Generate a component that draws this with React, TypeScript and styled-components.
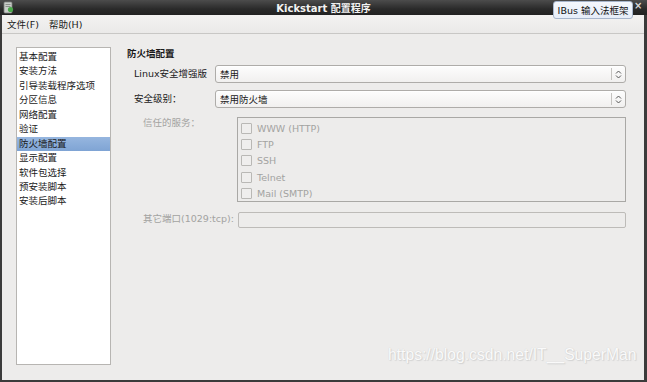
import React from "react";
import styled, { createGlobalStyle } from "styled-components";

const GlobalStyle = createGlobalStyle`
  html, body { margin: 0; padding: 0; background: #edeceb; }
  body { font-family: "DejaVu Sans", "Noto Sans CJK SC", sans-serif; font-size: 9.5px; color: #1a1a1a; }
`;

const Frame = styled.div`
  position: relative;
  width: 647px;
  height: 382px;
  display: flex;
  flex-direction: column;
  overflow: hidden;
`;

const TitleBar = styled.div`
  height: 15px;
  flex: none;
  display: flex;
  align-items: center;
  justify-content: center;
  background: linear-gradient(#4c4c4c, #2a2a2a 60%, #222);
  color: #f2f2f2;
  font-weight: bold;
  font-size: 10px;
  position: relative;
`;

const AppIcon = styled.svg`
  position: absolute;
  left: 3px;
  top: 1px;
`;

const Body = styled.div`
  flex: 1;
  display: flex;
  flex-direction: column;
  background: #edeceb;
  border-left: 2px solid #3b3b3b;
  border-right: 3px solid #3b3b3b;
  border-bottom: 2px solid #3b3b3b;
`;

const MenuBar = styled.div`
  height: 18px;
  flex: none;
  display: flex;
  align-items: center;
  gap: 10px;
  padding-left: 5px;
  background: linear-gradient(#f3f2f1, #eae9e8);
  border-bottom: 1px solid #c8c7c5;
`;

const MenuItem = styled.span`
  font-size: 9.5px;
  color: #1a1a1a;
`;

const Content = styled.div`
  flex: 1;
  display: flex;
  padding: 13px 0 0 14px;
  gap: 16px;
`;

const NavList = styled.ul`
  list-style: none;
  margin: 0;
  padding: 2px 0 0;
  width: 93px;
  height: 314px;
  background: #fff;
  border: 1px solid #b7b5b2;
`;

const NavItem = styled.li<{ $active?: boolean }>`
  height: 14.45px;
  line-height: 14.45px;
  padding-left: 2px;
  white-space: nowrap;
  background: ${(p) => (p.$active ? "linear-gradient(#96b6df, #7fa4d4)" : "transparent")};
  color: #1a1a1a;
`;

const Panel = styled.div`
  display: flex;
  flex-direction: column;
  width: 499px;
`;

const Heading = styled.div`
  font-weight: bold;
  height: 14px;
  line-height: 14px;
  margin-bottom: 4px;
`;

const Row = styled.div<{ $indent: number; $labelWidth: number; $gap: number }>`
  display: flex;
  align-items: flex-start;
  margin-top: ${(p) => p.$gap}px;
  padding-left: ${(p) => p.$indent}px;
  & > label {
    flex: none;
    width: ${(p) => p.$labelWidth}px;
  }
`;

const Label = styled.label<{ $disabled?: boolean; $top?: number }>`
  color: ${(p) => (p.$disabled ? "#a3a3a1" : "#1a1a1a")};
  padding-top: ${(p) => p.$top ?? 0}px;
  line-height: 12px;
  white-space: nowrap;
`;

const Combo = styled.div`
  width: 409px;
  height: 16px;
  display: flex;
  align-items: center;
  border: 1px solid #aeaca9;
  border-radius: 3px;
  background: linear-gradient(#fdfdfd, #f1f0ef);
  box-shadow: inset 0 1px 0 #fff;
`;

const ComboText = styled.span`
  flex: 1;
  padding-left: 4px;
`;

const ComboArrows = styled.div`
  width: 13px;
  height: 12px;
  border-left: 1px solid #c4c2bf;
  display: flex;
  align-items: center;
  justify-content: center;
`;

const ServiceBox = styled.div`
  width: 390px;
  height: 85px;
  box-sizing: border-box;
  border: 1px solid #a9a8a5;
  padding: 2px 0 0 3px;
`;

const CheckRow = styled.div`
  display: flex;
  align-items: center;
  height: 16.3px;
  gap: 5px;
  color: #a3a3a1;
`;

const CheckBox = styled.span`
  width: 9px;
  height: 9px;
  border: 1px solid #b9b8b5;
  border-radius: 1px;
  background: #efeeed;
`;

const PortInput = styled.div`
  width: 386px;
  height: 14px;
  border: 1px solid #bdbbb8;
  border-radius: 2px;
  background: #edeceb;
`;

const IBusTip = styled.div`
  position: absolute;
  left: 553px;
  top: 1px;
  width: 78px;
  height: 16px;
  border: 1px solid #a7b6cc;
  border-radius: 3px;
  background: linear-gradient(#f4f7fc, #e6edf8);
  color: #111;
  font-size: 9.5px;
  display: flex;
  align-items: center;
  justify-content: center;
  white-space: nowrap;
`;

const CloseMark = styled.span`
  position: absolute;
  left: 634px;
  top: 0px;
  color: #d8d8d8;
  font-size: 10px;
  font-weight: bold;
`;

const Watermark = styled.div`
  position: absolute;
  left: 388px;
  top: 346px;
  font-family: "Liberation Sans", Arial, sans-serif;
  font-size: 15.7px;
  color: #fafafa;
  text-shadow: 0 0 1px #c9c9c9, 1px 1px 1px #d4d4d4;
  white-space: nowrap;
`;

const navItems = [
  "基本配置",
  "安装方法",
  "引导装载程序选项",
  "分区信息",
  "网络配置",
  "验证",
  "防火墙配置",
  "显示配置",
  "软件包选择",
  "预安装脚本",
  "安装后脚本",
];

const services = ["WWW (HTTP)", "FTP", "SSH", "Telnet", "Mail (SMTP)"];

const Arrows = () => (
  <svg width="7" height="9" viewBox="0 0 7 9">
    <path d="M1 3.5 L3.5 1 L6 3.5" fill="none" stroke="#555" strokeWidth="1" />
    <path d="M1 5.5 L3.5 8 L6 5.5" fill="none" stroke="#555" strokeWidth="1" />
  </svg>
);

export default function App() {
  return (
    <Frame>
      <GlobalStyle />
      <TitleBar>
        <AppIcon width="11" height="13" viewBox="0 0 11 13">
          <rect x="1" y="1" width="8" height="11" rx="1" fill="#c9cdc9" stroke="#7b7f7b" strokeWidth="0.8" />
          <rect x="2.5" y="3" width="5" height="1" fill="#8a8f8a" />
          <rect x="2.5" y="5" width="5" height="1" fill="#8a8f8a" />
          <circle cx="7.5" cy="8.5" r="2.6" fill="#4aa84a" />
        </AppIcon>
        Kickstart 配置程序
      </TitleBar>
      <Body>
        <MenuBar>
          <MenuItem>文件(F)</MenuItem>
          <MenuItem>帮助(H)</MenuItem>
        </MenuBar>
        <Content>
          <NavList>
            {navItems.map((n) => (
              <NavItem key={n} $active={n === "防火墙配置"}>
                {n}
              </NavItem>
            ))}
          </NavList>
          <Panel>
            <Heading>防火墙配置</Heading>
            <Row $indent={7} $labelWidth={81} $gap={0}>
              <Label $top={3}>Linux安全增强版</Label>
              <Combo>
                <ComboText>禁用</ComboText>
                <ComboArrows>
                  <Arrows />
                </ComboArrows>
              </Combo>
            </Row>
            <Row $indent={7} $labelWidth={81} $gap={7}>
              <Label $top={3}>安全级别：</Label>
              <Combo>
                <ComboText>禁用防火墙</ComboText>
                <ComboArrows>
                  <Arrows />
                </ComboArrows>
              </Combo>
            </Row>
            <Row $indent={16} $labelWidth={94} $gap={9}>
              <Label $disabled $top={0}>信任的服务：</Label>
              <ServiceBox>
                {services.map((s) => (
                  <CheckRow key={s}>
                    <CheckBox />
                    {s}
                  </CheckRow>
                ))}
              </ServiceBox>
            </Row>
            <Row $indent={16} $labelWidth={95} $gap={10}>
              <Label $disabled $top={1}>其它端口(1029:tcp):</Label>
              <PortInput />
            </Row>
          </Panel>
        </Content>
      </Body>
      <IBusTip>IBus 输入法框架</IBusTip>
      <CloseMark>×</CloseMark>
      <Watermark>https://blog.csdn.net/IT__SuperMan</Watermark>
    </Frame>
  );
}
